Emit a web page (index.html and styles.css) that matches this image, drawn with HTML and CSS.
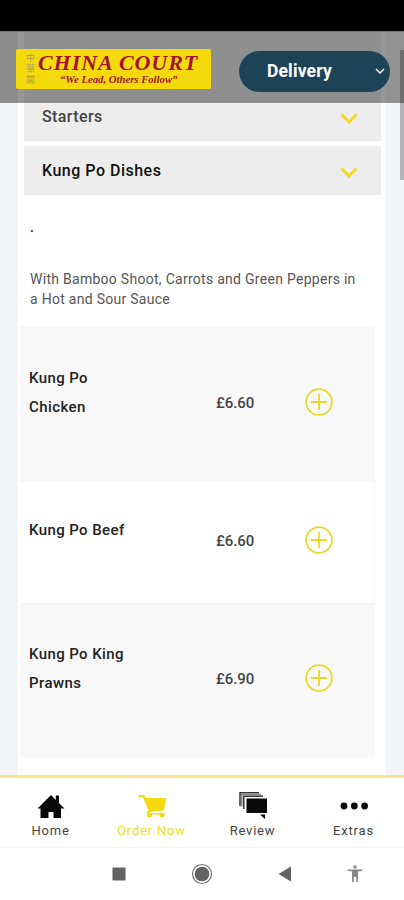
FILE: index.html
```html
<!DOCTYPE html>
<html lang="en">
<head>
    <meta charset="UTF-8">
    <meta name="viewport" content="width=device-width, initial-scale=1.0">
    <title>China Court</title>
    <link rel="stylesheet" href="styles.css">
</head>
<body>
    <div class="status-bar"></div>

    <header class="header">
        <div class="logo">
            <div class="logo-side">中華閣</div>
            <div class="logo-text">
                <div class="logo-name">CHINA COURT</div>
                <div class="logo-tag">“We Lead, Others Follow”</div>
            </div>
        </div>
        <button class="mode">
            <span>Delivery</span>
            <svg width="10" height="6" viewBox="0 0 10 6"><path d="M1 1l4 4 4-4"/></svg>
        </button>
    </header>

    <main class="content">
        <div class="panel">
            <div class="category category-cut">
                <span>Starters</span>
                <svg class="chevron" width="18" height="12" viewBox="0 0 18 12"><path d="M1.5 1.5L9 9l7.5-7.5"/></svg>
            </div>
            <div class="category">
                <span>Kung Po Dishes</span>
                <svg class="chevron" width="18" height="12" viewBox="0 0 18 12"><path d="M1.5 1.5L9 9l7.5-7.5"/></svg>
            </div>

            <div class="intro">
                <p class="dot">.</p>
                <p class="description">With Bamboo Shoot, Carrots and Green Peppers in<br>a Hot and Sour Sauce</p>
            </div>

            <div class="item item-grey item-first">
                <div class="name">Kung Po<br>Chicken</div>
                <div class="price">£6.60</div>
                <svg class="add" width="28" height="28" viewBox="0 0 28 28"><circle cx="14" cy="14" r="12.9"/><path d="M14 6v16M6 14h16"/></svg>
            </div>
            <div class="item item-short">
                <div class="name">Kung Po Beef</div>
                <div class="price">£6.60</div>
                <svg class="add" width="28" height="28" viewBox="0 0 28 28"><circle cx="14" cy="14" r="12.9"/><path d="M14 6v16M6 14h16"/></svg>
            </div>
            <div class="item item-grey item-last">
                <div class="name">Kung Po King<br>Prawns</div>
                <div class="price">£6.90</div>
                <svg class="add" width="28" height="28" viewBox="0 0 28 28"><circle cx="14" cy="14" r="12.9"/><path d="M14 6v16M6 14h16"/></svg>
            </div>
        </div>
        <div class="scrollbar"></div>
    </main>

    <nav class="tabs">
        <a class="tab">
            <svg width="28" height="26" viewBox="0 0 28 26">
                <path d="M14 1L.5 14.500h3V24h8v-6h5v6h7.500v-9.500h3.500L22 9V1.500h-3.200V6z"/>
            </svg>
            <span>Home</span>
        </a>
        <a class="tab active">
            <svg width="28" height="26" viewBox="0 0 28 26">
                <path d="M.5 1H6l2 3h20l-2 12.500-14.500 1.500v1H24v1.500H9.500l-.5-2 1.500-2.500L5 3.500H.5z"/>
                <circle cx="11.500" cy="21" r="2.500"/><circle cx="24" cy="21" r="2.500"/>
            </svg>
            <span>Order Now</span>
        </a>
        <a class="tab">
            <svg width="28" height="26" viewBox="0 0 28 26">
                <path class="line" d="M1 12V-1.200H20"/>
                <path class="line line-soft" d="M2.800 12.500V.5H22"/>
                <path class="line" d="M4.800 15V2.200H24"/>
                <path d="M7.500 4.500H28V19H7.500z"/>
                <path d="M21 20.500h5V25z"/>
            </svg>
            <span>Review</span>
        </a>
        <a class="tab">
            <svg width="28" height="26" viewBox="0 0 28 26">
                <circle cx="4" cy="12" r="3.400"/><circle cx="14.300" cy="12" r="3.400"/><circle cx="24.600" cy="12" r="3.400"/>
            </svg>
            <span>Extras</span>
        </a>
    </nav>

    <div class="system-nav">
        <svg width="14" height="14" viewBox="0 0 14 14"><path d="M.5.5h13v13H.5z"/></svg>
        <svg width="22" height="22" viewBox="0 0 22 22"><circle cx="11" cy="11" r="7.300"/><circle class="ring" cx="11" cy="11" r="9.500"/></svg>
        <svg width="14" height="16" viewBox="0 0 14 16"><path d="M.5 8L13 .5v15z"/></svg>
        <svg class="person" width="16" height="18" viewBox="0 0 16 18"><circle cx="8" cy="2" r="1.700"/><path d="M.5 4.500h15v1.300l-4.500.7V17H9.300v-5H6.700v5H5V6.500L.5 5.800z"/></svg>
    </div>
</body>
</html>
```

FILE: styles.css
```css
* {
    box-sizing: border-box;
}
body {
    margin: 0;
    height: 900px;
    display: flex;
    flex-direction: column;
    overflow: hidden;
    background: #fff;
    font-family: Roboto, sans-serif;
    color: #222;
}
.status-bar {
    height: 31px;
    background: #000;
}
.header {
    height: 72px;
    display: flex;
    justify-content: space-between;
    align-items: flex-start;
    padding: 18px 14px 0 16px;
    background:
        linear-gradient(#6d6d6d, #6d6d6d) 100% 18px / 4px 54px no-repeat,
        linear-gradient(90deg, #8e8e8f 18px, #979797 18px, #979797 24px, #8f8f8f 24px, #8f8f8f 381px, #979797 381px, #979797 386px, #929293 386px);
    border-top: 1px solid #777;
}
.logo {
    width: 195px;
    height: 40px;
    margin-top: -1px;
    display: flex;
    border-radius: 2px;
    background: #f5da0b;
}
.logo-side {
    width: 22px;
    padding: 4px 1px 0 0;
    writing-mode: vertical-rl;
    font: 9px/13px "Noto Sans CJK TC", sans-serif;
    letter-spacing: 2px;
    color: #a99d59;
}
.logo-text {
    flex: 1;
    font-family: "Liberation Serif", serif;
    font-style: italic;
    font-weight: bold;
    white-space: nowrap;
    color: #a31235;
}
.logo-name {
    margin-top: 3px;
    font-size: 22px;
    line-height: 22px;
    letter-spacing: 0.95px;
}
.logo-tag {
    padding-left: 22px;
    font-size: 10.700px;
    line-height: 11px;
}
.mode {
    width: 151px;
    height: 41px;
    margin-top: 1px;
    padding: 0 5px 2px 28px;
    display: flex;
    justify-content: space-between;
    align-items: center;
    border: none;
    border-radius: 21px;
    background: #1d4358;
    color: #fff;
    font: bold 17.500px Roboto, sans-serif;
    letter-spacing: 0.15px;
}
.mode path {
    fill: none;
    stroke: #fff;
    stroke-width: 1.4;
}
.content {
    height: 672px;
    display: flex;
    justify-content: space-between;
    background: #f4f5f8;
    padding-left: 18px;
}
.panel {
    width: 368px;
    background: #fff;
}
.category {
    height: 49px;
    margin: 0 5px 0 6px;
    padding: 0 23px 0 18px;
    display: flex;
    justify-content: space-between;
    align-items: center;
    background: #ededed;
    font-size: 16px;
    font-weight: 500;
    letter-spacing: 0.5px;
    color: #111;
}
.category-cut {
    height: 38px;
    margin-bottom: 5px;
    padding-bottom: 12px;
    letter-spacing: 0.4px;
    color: #444;
}
.chevron {
    margin-top: 5px;
    fill: none;
    stroke: #f3d91e;
    stroke-width: 3;
}
.intro {
    height: 131px;
    padding: 22px 0 0 12px;
    font-size: 14px;
    line-height: 20px;
    color: #555;
}
.intro p {
    margin: 0;
}
.dot {
    font-weight: 500;
    color: #222;
}
.intro .description {
    margin-top: 32px;
    letter-spacing: 0.28px;
}
.item {
    width: 355px;
    margin-left: 2px;
    padding: 0 41px 0 9px;
    display: grid;
    grid-template-columns: 187px 1fr 28px;
    border-right: 1px solid #f6f6f6;
}
.item-grey {
    background: #f8f8f8;
}
.item-first {
    height: 156px;
    padding-top: 38px;
}
.item-short {
    height: 121px;
    padding-top: 34px;
}
.item-last {
    height: 154px;
    padding-top: 36px;
    border-top: 1px solid #f1f1f1;
}
.name {
    font-size: 15px;
    font-weight: 500;
    line-height: 29px;
    letter-spacing: 0.4px;
}
.price {
    padding-top: 30px;
    font-size: 15px;
    font-weight: 500;
    line-height: 18px;
    letter-spacing: -0.1px;
    color: #444;
}
.add {
    margin-top: 24px;
    fill: none;
    stroke: #ecd827;
    stroke-width: 1.8;
}
.item-short .price {
    padding-top: 16px;
}
.item-short .add {
    margin-top: 10px;
}
.scrollbar {
    width: 4px;
    height: 77px;
    background: #b5b5b7;
}
.tabs {
    height: 73px;
    display: grid;
    grid-template-columns: repeat(4, 101px);
    border-top: 3px solid #f8e88c;
    border-bottom: 1px solid #f6f6f6;
}
.tab {
    padding-top: 16px;
    display: flex;
    flex-direction: column;
    align-items: center;
    font-size: 13px;
    line-height: 18px;
    letter-spacing: 0.8px;
    color: #444;
}
.tab svg {
    overflow: visible;
    fill: #090909;
}
.tab span {
    margin-top: 2px;
}
.tab .line {
    fill: none;
    stroke: #333;
    stroke-width: 1.5;
}
.tab .line-soft {
    stroke: #888;
}
.active {
    color: #eedb2c;
}
.active svg {
    fill: #f3d90d;
}
.system-nav {
    flex: 1;
    display: grid;
    grid-template-columns: 84px 82px 83px 57px;
    align-items: center;
    justify-items: center;
    padding-left: 77px;
    fill: #626262;
}
.system-nav .ring {
    fill: none;
    stroke: #777;
    stroke-width: 1.2;
}
.system-nav .person {
    fill: #888;
}
```
